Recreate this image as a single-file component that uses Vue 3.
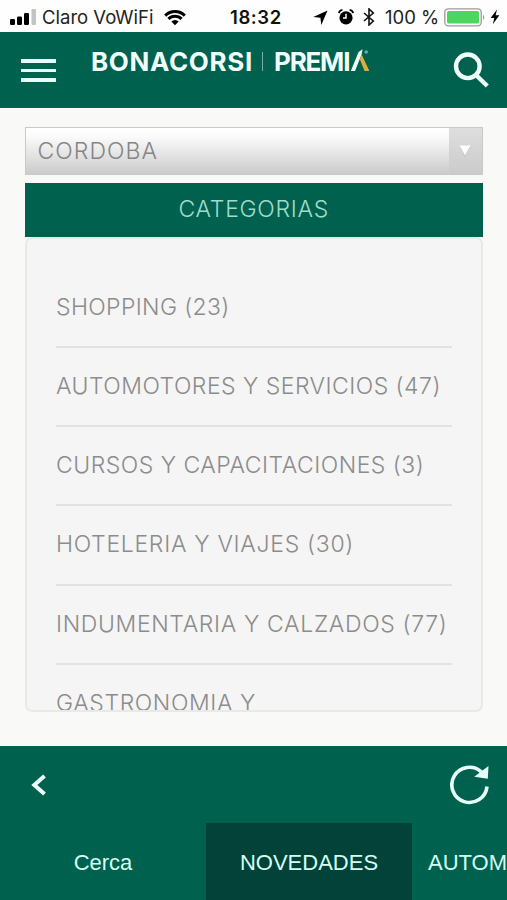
<template>
  <div class="screen">
    <div class="status-bar">
      <svg class="signal" viewBox="0 0 28 16" width="28" height="16">
        <rect x="0" y="10" width="5" height="6" rx="1.2" />
        <rect x="7" y="7.5" width="5" height="8.5" rx="1.2" />
        <rect x="14" y="4" width="5" height="12" rx="1.2" />
        <rect x="21.5" y="0" width="4.5" height="16" rx="1.2" fill="#c4c4c4" />
      </svg>
      <span class="carrier">Claro VoWiFi</span>
      <svg class="wifi" viewBox="0 0 22 17" width="22" height="17">
        <path d="M1.2 6.6 A14 14 0 0 1 20.8 6.6" />
        <path d="M4.4 9.9 A9.4 9.4 0 0 1 17.6 9.9" />
        <path class="dot" d="M11 16.2 L7.3 12.6 A5.3 5.3 0 0 1 14.7 12.6 Z" />
      </svg>
      <span class="time">18:32</span>
      <svg class="location" viewBox="0 0 15 15" width="15" height="15">
        <path d="M14.5 0.5 L8.3 15 L7.4 7.8 L0.3 6.9 Z" />
      </svg>
      <svg class="alarm" viewBox="0 0 16 16" width="16" height="16">
        <circle cx="8" cy="8.8" r="6.6" />
        <path class="bell" d="M0.9 4.2 A4 4 0 0 1 4.4 0.9 M11.6 0.9 A4 4 0 0 1 15.1 4.2" />
        <path class="hands" d="M8 4.7 V9 H5" />
      </svg>
      <svg class="bluetooth" viewBox="0 0 12 18" width="12" height="18">
        <path d="M1 5 L10.3 13 L6 17 V1 L10.3 5 L1 13" />
      </svg>
      <span class="percent">100 %</span>
      <svg class="battery" viewBox="0 0 42 19" width="42" height="19">
        <rect x="0.8" y="0.8" width="36.4" height="17" rx="3.5" fill="#fff" stroke="#9a9a9a" stroke-width="1.3" />
        <rect x="3" y="3" width="32" height="12.6" rx="1.5" fill="#4cd55f" />
        <path d="M39 6.5 Q41.5 9.3 39 12 Z" fill="#9a9a9a" />
      </svg>
      <svg class="bolt" viewBox="0 0 10 16" width="10" height="16">
        <path d="M7 0.5 L0.6 9 H4.3 L2.8 15.2 L9.4 6.3 H5.6 Z" />
      </svg>
    </div>

    <header class="header">
      <button class="menu">
        <span></span>
        <span></span>
        <span></span>
      </button>
      <div class="brand">
        <span class="brand-name">BONACORSI</span>
        <span class="brand-divider"></span>
        <span class="brand-program">PREMI</span>
        <svg class="brand-a" viewBox="0 0 22 24" width="22" height="24">
          <path d="M0.8 22 L8.6 3 L12.6 0.3 L11.6 5.5 L5 22 Z" fill="#f1fffb" />
          <path d="M11.6 5.5 L19.4 22 H14.6 L9.8 10.2 Z" fill="#dcae3c" />
          <circle cx="16.2" cy="3" r="1.8" fill="#5aaeb4" />
        </svg>
      </div>
      <svg class="search" viewBox="0 0 37 37" width="37" height="37">
        <circle cx="14.8" cy="14.3" r="11.8" />
        <path d="M23 23 L34.3 34" />
      </svg>
    </header>

    <main class="content">
      <div class="select">
        <span class="select-value">CORDOBA</span>
        <span class="select-arrow">
          <svg viewBox="0 0 12 12" width="12" height="12">
            <path d="M0.5 1.8 H11.5 L6 12 Z" fill="#c2c2c2" />
            <path d="M0.5 0.5 H11.5 L6 10.6 Z" fill="#fff" />
          </svg>
        </span>
      </div>
      <h2 class="title">CATEGORIAS</h2>
      <ul class="list">
        <li v-for="item in categories" :key="item.label">
          <span :style="{ letterSpacing: item.spacing + 'px' }">{{ item.label }}</span>
        </li>
      </ul>
    </main>

    <footer class="footer">
      <div class="toolbar">
        <svg class="back" viewBox="0 0 16 22" width="16" height="22">
          <path d="M13.5 2 L3.3 11 L13.5 20" />
        </svg>
        <svg class="reload" viewBox="0 0 40 40" width="40" height="40">
          <path class="ring" d="M37 21.5 A17.6 17.6 0 1 1 31.5 7" />
          <path class="head" d="M38.5 1 L37.8 13.8 L24.2 11.8 Z" />
        </svg>
      </div>
      <nav class="tabs">
        <a v-for="tab in tabs" :key="tab" :class="{ active: tab === current }" @click="current = tab">{{ tab }}</a>
      </nav>
    </footer>
  </div>
</template>

<script setup>
import { ref } from 'vue'

const categories = [
  { label: 'SHOPPING (23)', spacing: 0.36 },
  { label: 'AUTOMOTORES Y SERVICIOS (47)', spacing: 0.47 },
  { label: 'CURSOS Y CAPACITACIONES (3)', spacing: 0.49 },
  { label: 'HOTELERIA Y VIAJES (30)', spacing: 0.7 },
  { label: 'INDUMENTARIA Y CALZADOS (77)', spacing: 0.65 },
  { label: 'GASTRONOMIA Y', spacing: 0.6 }
]

const tabs = ['Cerca', 'NOVEDADES', 'AUTOM']
const current = ref('NOVEDADES')
</script>

<style>
body {
  margin: 0;
  background: #f9f9f7;
}
</style>

<style scoped>
* {
  box-sizing: border-box;
}

.screen {
  width: 507px;
  height: 900px;
  display: flex;
  flex-direction: column;
  overflow: hidden;
  background: #f9f9f7;
  font-family: Inter, 'Liberation Sans', sans-serif;
}

svg {
  display: block;
  flex: none;
}

/* Status bar */
.status-bar {
  display: flex;
  align-items: center;
  flex: none;
  height: 32px;
  padding: 2px 0 0 10px;
  background: #fefefe;
  color: #222;
  font-size: 18.5px;
  line-height: 24px;
  white-space: nowrap;
}

.carrier {
  width: 122px;
  margin-left: 4px;
}

.wifi {
  fill: none;
  stroke: #000;
  stroke-width: 3;
}

.wifi .dot {
  fill: #000;
  stroke: none;
}

.time {
  width: 84px;
  margin-left: 44px;
  font-weight: 600;
  letter-spacing: 0.6px;
  color: #111;
}

.location {
  margin-left: -1px;
}

.alarm {
  margin-left: 10px;
}

.bell {
  fill: none;
  stroke: #000;
  stroke-width: 1.8;
}

.hands {
  fill: none;
  stroke: #fff;
  stroke-width: 1.5;
}

.bluetooth {
  margin-left: 9px;
  fill: none;
  stroke: #111;
  stroke-width: 1.6;
}

.percent {
  width: 59px;
  margin-left: 10px;
}

.bolt {
  margin-left: 4px;
}

/* Header */
.header {
  display: flex;
  flex: none;
  height: 76px;
  padding: 0 17px 0 21px;
  background: #00614e;
}

.menu {
  display: flex;
  flex-direction: column;
  gap: 6px;
  width: 35px;
  margin: 27px 0 0;
  padding: 0;
  border: 0;
  background: none;
}

.menu span {
  width: 35px;
  height: 3.5px;
  background: #e6fffa;
}

.brand {
  display: flex;
  align-items: flex-start;
  margin: 17px 0 0 35px;
  color: #f1fffb;
  font-size: 26px;
  font-weight: 700;
  line-height: 26px;
}

.brand-name {
  width: 171px;
  letter-spacing: 0.65px;
}

.brand-divider {
  width: 1px;
  height: 19px;
  margin-top: 3px;
  background: #7eafa4;
}

.brand-program {
  width: 76px;
  margin-left: 11px;
  letter-spacing: -1.2px;
}

.search {
  margin: 20px 0 0 auto;
  fill: none;
  stroke: #f1fffb;
  stroke-width: 4.4;
}

/* Content */
.content {
  display: flex;
  flex: none;
  flex-direction: column;
  height: 638px;
  padding: 18px 24px 0 24.5px;
  border-top: 1px solid #fff;
}

.select {
  display: flex;
  flex: none;
  height: 48px;
  border: 1px solid #c9c9c9;
  background: linear-gradient(#fff, #fafafa 20%, #cbcbcb);
  color: #858585;
  font-size: 23px;
  font-weight: 300;
  letter-spacing: 1.05px;
  line-height: 46px;
}

.select-value {
  flex: 1;
  padding-left: 12px;
}

.select-arrow {
  display: flex;
  align-items: center;
  justify-content: center;
  width: 33px;
  padding-right: 2px;
  background: linear-gradient(#dedede, #cbcbcb);
}

.title {
  flex: none;
  height: 54px;
  margin: 8px 0 0;
  background: #00614e;
  color: #9fdccb;
  font-size: 23px;
  font-weight: 300;
  letter-spacing: 0.7px;
  line-height: 52px;
  text-align: center;
}

.list {
  flex: none;
  height: 475px;
  margin: 0;
  padding: 30px 29px 0 29.5px;
  overflow: hidden;
  border: 2px solid #e9e9e8;
  border-radius: 7px;
  background: #f5f5f5;
  list-style: none;
}

.list li {
  height: 79.15px;
  padding-top: 23px;
  border-bottom: 2px solid #e2e2e2;
  color: #8c8c8c;
  font-size: 23px;
  font-weight: 300;
  line-height: 30px;
  white-space: nowrap;
}

/* Footer */
.footer {
  flex: none;
  height: 154px;
  background: #00614e;
}

.toolbar {
  display: flex;
  align-items: center;
  justify-content: space-between;
  height: 77px;
  padding: 0 17px 0 31px;
}

.back {
  fill: none;
  stroke: #eefffb;
  stroke-width: 4;
}

.ring {
  fill: none;
  stroke: #e9fffa;
  stroke-width: 3.6;
}

.head {
  fill: #e9fffa;
}

.tabs {
  display: flex;
  height: 77px;
}

.tabs a {
  flex: none;
  width: 206px;
  color: #d5fff4;
  font-family: 'Liberation Sans', sans-serif;
  font-size: 22px;
  line-height: 79px;
  text-align: center;
}

.tabs a.active {
  background: #034238;
}

.tabs a:last-child {
  padding-left: 16px;
  text-align: left;
}
</style>
